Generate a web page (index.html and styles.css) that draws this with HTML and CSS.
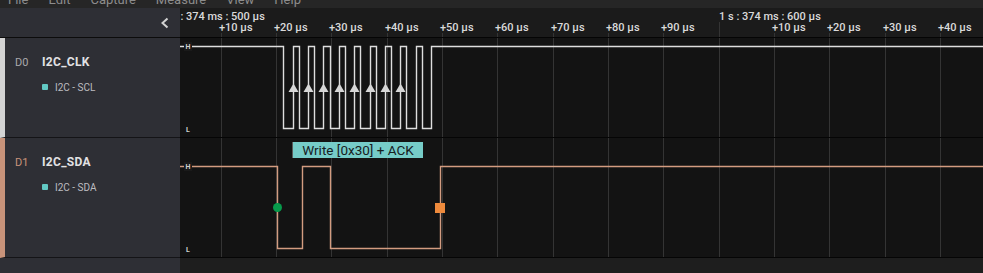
FILE: index.html
```html
<!DOCTYPE html>
<html>
    <head>
        <title>Logic capture</title>
        <link rel="stylesheet" href="styles.css">
    </head>
    <body>
        <div class="menubar">
            <span>File</span>
            <span>Edit</span>
            <span>Capture</span>
            <span>Measure</span>
            <span>View</span>
            <span>Help</span>
        </div>
        <div class="workspace">
            <div class="sidebar">
                <div class="side-head">
                    <svg class="collapse" width="10" height="12" viewBox="0 0 10 12">
                        <polyline points="7.5,1.5 2.5,6 7.5,10.5" />
                    </svg>
                </div>
                <div class="channel clk">
                    <div class="channel-top">
                        <span class="channel-id">D0</span>
                        <span class="channel-name">I2C_CLK</span>
                    </div>
                    <div class="analyzer"><i class="swatch"></i>I2C - SCL</div>
                </div>
                <div class="channel sda">
                    <div class="channel-top">
                        <span class="channel-id">D1</span>
                        <span class="channel-name">I2C_SDA</span>
                    </div>
                    <div class="analyzer"><i class="swatch"></i>I2C - SDA</div>
                </div>
                <div class="side-rest"></div>
            </div>
            <svg class="waves" width="803" height="265" viewBox="180 8 803 265">
                <!-- backgrounds -->
                <rect class="ruler-bg" x="180" y="8" width="803" height="29" />
                <rect class="lane-bg" x="180" y="38" width="803" height="99" />
                <rect class="lane-bg" x="180" y="138" width="803" height="119" />
                <rect class="foot-bg" x="180" y="258" width="803" height="15" />

                <!-- grid -->
                <g class="grid">
                    <line x1="221.5" y1="33" x2="221.5" y2="257" />
                    <line x1="276.5" y1="33" x2="276.5" y2="257" />
                    <line x1="331.5" y1="33" x2="331.5" y2="257" />
                    <line x1="387.5" y1="33" x2="387.5" y2="257" />
                    <line x1="442.5" y1="33" x2="442.5" y2="257" />
                    <line x1="497.5" y1="33" x2="497.5" y2="257" />
                    <line x1="553.5" y1="33" x2="553.5" y2="257" />
                    <line x1="608.5" y1="33" x2="608.5" y2="257" />
                    <line x1="663.5" y1="33" x2="663.5" y2="257" />
                    <line x1="719.5" y1="22" x2="719.5" y2="257" />
                    <line x1="774.5" y1="33" x2="774.5" y2="257" />
                    <line x1="829.5" y1="33" x2="829.5" y2="257" />
                    <line x1="885.5" y1="33" x2="885.5" y2="257" />
                    <line x1="940.5" y1="33" x2="940.5" y2="257" />
                </g>

                <!-- time ruler -->
                <g class="ruler">
                    <text class="major" x="163" y="20">1 s : 374 ms : 500 µs</text>
                    <text class="major" x="719" y="20">1 s : 374 ms : 600 µs</text>
                    <text x="219" y="31">+10 µs</text>
                    <text x="274" y="31">+20 µs</text>
                    <text x="329" y="31">+30 µs</text>
                    <text x="385" y="31">+40 µs</text>
                    <text x="440" y="31">+50 µs</text>
                    <text x="495" y="31">+60 µs</text>
                    <text x="551" y="31">+70 µs</text>
                    <text x="606" y="31">+80 µs</text>
                    <text x="661" y="31">+90 µs</text>
                    <text x="772" y="31">+10 µs</text>
                    <text x="827" y="31">+20 µs</text>
                    <text x="883" y="31">+30 µs</text>
                    <text x="938" y="31">+40 µs</text>
                </g>

                <!-- D0 clock -->
                <polyline class="clk-wave" points="180,46.5 283.5,46.5 283.5,128.5 293.5,128.5 293.5,46.5 299.5,46.5 299.5,128.5 308.5,128.5 308.5,46.5 314.5,46.5 314.5,128.5 323.5,128.5 323.5,46.5 330.5,46.5 330.5,128.5 339.5,128.5 339.5,46.5 345.5,46.5 345.5,128.5 354.5,128.5 354.5,46.5 360.5,46.5 360.5,128.5 370.5,128.5 370.5,46.5 376.5,46.5 376.5,128.5 385.5,128.5 385.5,46.5 391.5,46.5 391.5,128.5 400.5,128.5 400.5,46.5 406.5,46.5 406.5,128.5 416.5,128.5 416.5,46.5 422.5,46.5 422.5,128.5 431.5,128.5 431.5,46.5 983,46.5" />
                <g class="edge">
                    <polygon points="293.5,83.5 288.5,92 298.5,92" />
                    <polygon points="308.5,83.5 303.5,92 313.5,92" />
                    <polygon points="323.5,83.5 318.5,92 328.5,92" />
                    <polygon points="339.5,83.5 334.5,92 344.5,92" />
                    <polygon points="354.5,83.5 349.5,92 359.5,92" />
                    <polygon points="370.5,83.5 365.5,92 375.5,92" />
                    <polygon points="385.5,83.5 380.5,92 390.5,92" />
                    <polygon points="400.5,83.5 395.5,92 405.5,92" />
                </g>
                <rect class="level-bg" x="184" y="42" width="8" height="9" />
                <text class="level" x="188" y="48.5">H</text>
                <text class="level" x="188" y="131.5">L</text>

                <!-- D1 data -->
                <rect class="frame" x="292" y="142" width="131" height="16" />
                <line class="frame-edge" x1="292.5" y1="142" x2="292.5" y2="158" />
                <text class="frame-text" x="358" y="154.5">Write [0x30] + ACK</text>
                <polyline class="sda-wave" points="180,166.5 277.5,166.5 277.5,248.5 302.5,248.5 302.5,166.5 330.5,166.5 330.5,248.5 440.5,248.5 440.5,166.5 983,166.5" />
                <circle class="start" cx="277.5" cy="207.5" r="4.5" />
                <rect class="stop" x="435" y="203" width="10" height="10" />
                <rect class="level-bg" x="184" y="162" width="8" height="9" />
                <text class="level" x="188" y="168.5">H</text>
                <text class="level" x="188" y="251.5">L</text>

                <!-- separators -->
                <g class="sep">
                    <line x1="180" y1="37.5" x2="983" y2="37.5" />
                    <line x1="180" y1="137.5" x2="983" y2="137.5" />
                    <line x1="180" y1="257.5" x2="983" y2="257.5" />
                </g>
            </svg>
        </div>
    </body>
</html>
```

FILE: styles.css
```css
body {
    margin: 0;
    background: #1d1d1d;
    font-family: Roboto, "Liberation Sans", sans-serif;
    overflow: hidden;
}
.menubar {
    height: 8px;
    overflow: hidden;
    background: #262626;
    color: #8c8c8c;
    font-size: 13px;
    line-height: 16px;
    padding-left: 8px;
    display: flex;
    gap: 20px;
}
.menubar span {
    margin-top: -8px;
}
.workspace {
    display: flex;
    height: 265px;
}
.sidebar {
    width: 180px;
    flex: none;
    display: flex;
    flex-direction: column;
    background: #2e2f35;
}
.side-head {
    height: 29px;
    border-bottom: 1px solid #0c0c0c;
    display: flex;
    align-items: center;
    justify-content: flex-end;
    padding-right: 10px;
}
.collapse polyline {
    fill: none;
    stroke: #d2d2d2;
    stroke-width: 2;
}
.channel {
    border-left: 5px solid #d4d4d4;
    border-bottom: 1px solid #141417;
    padding: 17px 0 0 10px;
    box-sizing: border-box;
}
.channel.clk {
    height: 100px;
}
.channel.sda {
    height: 120px;
    border-left-color: #c8937a;
}
.channel-top {
    display: flex;
    align-items: center;
    height: 14px;
}
.channel-id {
    width: 27px;
    font-size: 11px;
    color: #a9a9ab;
}
.sda .channel-id {
    color: #c8937a;
}
.channel-name {
    font-size: 12px;
    font-weight: bold;
    color: #e2e2e4;
    letter-spacing: 0.3px;
}
.analyzer {
    display: flex;
    align-items: center;
    margin: 12px 0 0 27px;
    height: 12px;
    font-size: 10px;
    color: #bdbdc0;
}
.swatch {
    width: 6px;
    height: 6px;
    border-radius: 1px;
    background: #62c9c4;
    margin-right: 7px;
}
.side-rest {
    flex: 1;
}
.waves {
    display: block;
    flex: none;
}
.ruler-bg {
    fill: #1b1b1b;
}
.lane-bg {
    fill: #131313;
}
.foot-bg {
    fill: #1e1e1e;
}
.grid line {
    stroke: #343434;
    stroke-width: 1;
}
.ruler text {
    font-size: 11px;
    font-weight: 500;
    fill: #dadada;
}
.clk-wave {
    fill: none;
    stroke: #dedede;
    stroke-width: 1.4;
}
.edge polygon {
    fill: #d6d6d6;
}
.sda-wave {
    fill: none;
    stroke: #d39c80;
    stroke-width: 1.4;
}
.level-bg {
    fill: #1a1a1a;
}
.level {
    font-size: 7px;
    font-weight: bold;
    fill: #cfcfcf;
    text-anchor: middle;
}
.frame {
    fill: #76ccc8;
}
.frame-edge {
    stroke: #5a5a5a;
}
.frame-text {
    font-size: 13.5px;
    fill: #17201f;
    text-anchor: middle;
}
.start {
    fill: #079a4b;
}
.stop {
    fill: #ee8a3c;
}
.sep line {
    stroke: #050505;
    stroke-width: 1;
}
```
